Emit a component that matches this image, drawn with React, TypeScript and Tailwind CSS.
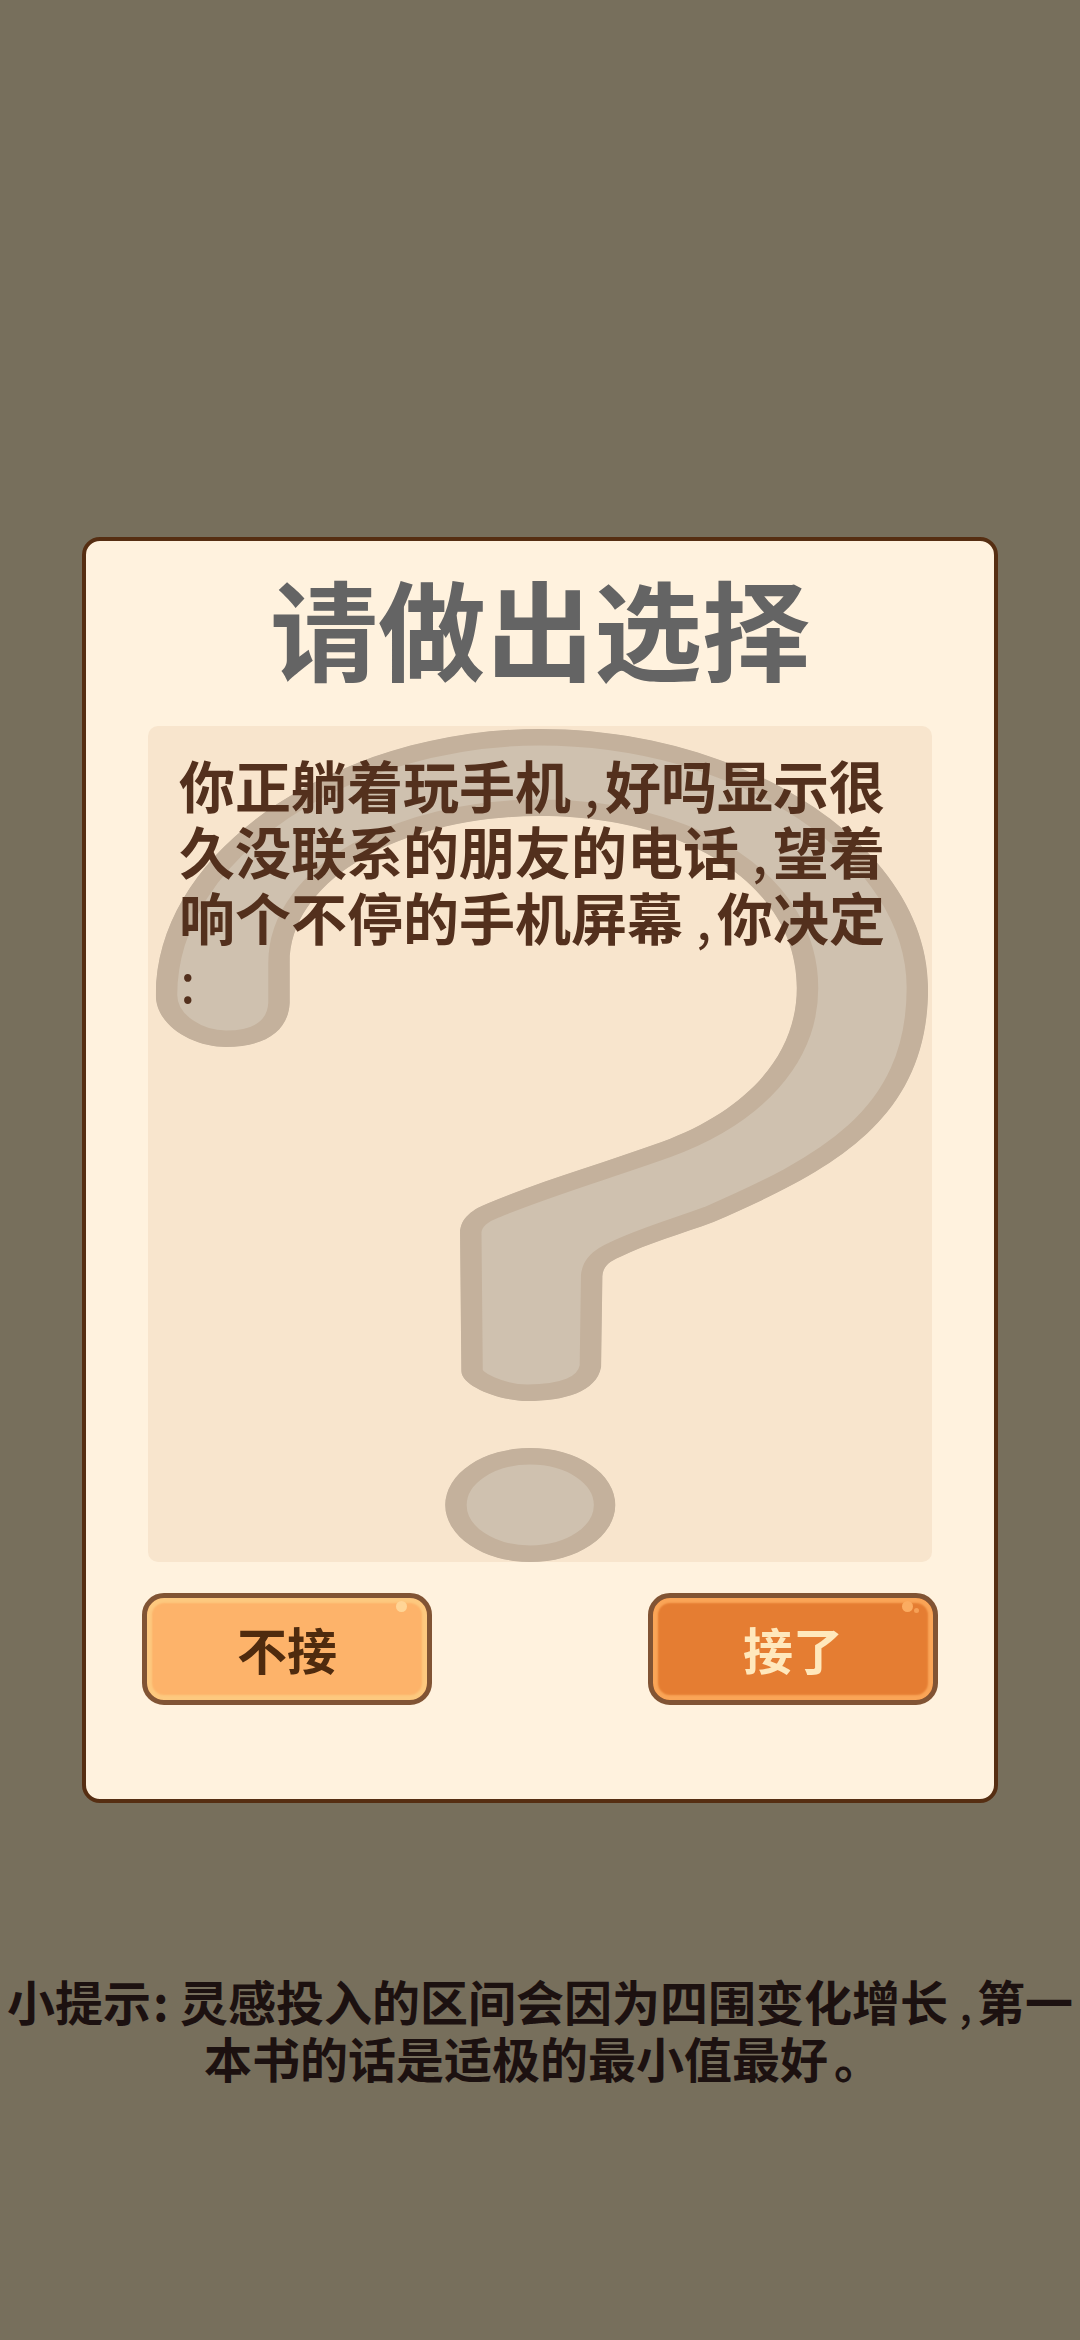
const MARK =
  "M6 269C6 120 150 3 301 3C465 3 600 125 600 262C600 395 525 445 435 496C410 508 385 517 363 531C354 536 350 541 349.5 550L348.5 641C345 666 320 675 292 675C270 675 241 660 241 645L240 507C240 492 250 483 262 477C300 456 350 437 395 416C460 385 499 330 499 262C499 160 415 90 301 90C200 90 109 150 109 237L109 277C108 305 90 321 60 321C35 321 6 300 6 269Z";

const story = [
  ["你正躺着玩手机", "好吗显示很"],
  ["久没联系的朋友的电话", "望着"],
  ["响个不停的手机屏幕", "你决定"],
];

function QuestionMark() {
  return (
    <svg
      className="absolute inset-0 h-full w-full"
      viewBox="0 0 603 836"
      preserveAspectRatio="none"
    >
      {/* Clipping to the shape keeps only the inner half of the stroke */}
      <clipPath id="mark">
        <path d={MARK} />
        <ellipse cx="294" cy="779" rx="65.4" ry="57" />
      </clipPath>
      <g clipPath="url(#mark)" fill="#cfc1af" stroke="#c4b19c" strokeWidth="33">
        <path d={MARK} />
        <ellipse cx="294" cy="779" rx="65.4" ry="57" />
      </g>
    </svg>
  );
}

export default function App() {
  return (
    <div className="flex h-[2340px] w-[1080px] flex-col items-center overflow-hidden bg-[#776f5c] pt-[537px] font-['Noto_Sans_CJK_SC',sans-serif] font-bold">
      {/* Dialog */}
      <div className="flex h-[1266px] w-[916px] shrink-0 flex-col items-center rounded-[18px] border-4 border-[#562e12] bg-[#fff2de]">
        <h1 className="mt-[15px] h-[140px] text-[108px] leading-[140px] whitespace-nowrap text-[#646464]">
          请做出选择
        </h1>

        <div className="relative mt-[30px] h-[836px] w-[784px] overflow-hidden rounded-[10px] bg-[#f8e5cd]">
          <QuestionMark />
          <div className="relative pt-[25px] pl-[31px] text-[56px] leading-[66px] whitespace-nowrap text-[#53301d]">
            {story.map(([before, after]) => (
              <p key={before}>
                {before}
                <span className="inline-block w-[34px] pl-[13px] font-normal">,</span>
                {after}
              </p>
            ))}
            <p className="-mt-[3px] pl-px font-normal">:</p>
          </div>
        </div>

        {/* Choices */}
        <div className="mt-[31px] flex w-[796px] justify-between">
          <button className="relative h-[112px] w-[290px] rounded-[22px] border-[5px] border-[#815434] bg-[#fdb36a] pb-0.5 text-[50px] leading-none text-[#4f2b0e] shadow-[inset_0_0_2px_5px_#fdc97f]">
            不接
            <span className="absolute top-[3px] right-[20px] size-[11px] rounded-full bg-[#ffd596]" />
          </button>
          <button className="relative h-[112px] w-[290px] rounded-[22px] border-[5px] border-[#815434] bg-[#e57d32] pb-0.5 text-[50px] leading-none text-[#ffe8bc] shadow-[inset_0_0_2px_5px_#faa557]">
            接了
            <span className="absolute top-[3px] right-[20px] size-[11px] rounded-full bg-[#fbac61]" />
            <span className="absolute top-[10px] right-[14px] size-[5px] rounded-full bg-[#f6a056]" />
          </button>
        </div>
      </div>

      {/* Tip */}
      <div className="mt-[169px] text-center text-[48px] leading-[57px] whitespace-nowrap text-[#1c1110]">
        <p>
          小提示
          <span className="inline-block w-[29px] pl-[2px] text-left">:</span>
          灵感投入的区间会因为四围变化增长
          <span className="inline-block w-[29px] pl-[11px] text-left font-normal">,</span>
          第一
        </p>
        <p>
          本书的话是适极的最小值最好
          <span className="inline-block w-[48px] pl-[6px] text-left">。</span>
        </p>
      </div>
    </div>
  );
}
